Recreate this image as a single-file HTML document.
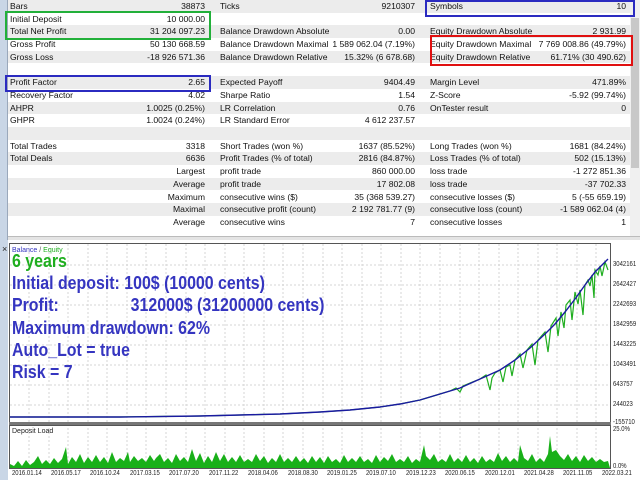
<!DOCTYPE html>
<html><head><meta charset="utf-8"><style>
*{margin:0;padding:0;box-sizing:border-box}
body{width:640px;height:480px;overflow:hidden;background:#fff;font-family:"Liberation Sans",sans-serif;font-size:8.6px;color:#111;position:relative}
.side{position:absolute;left:0;top:0;width:8px;height:480px;background:#c9d6e6;border-right:1px solid #9aa8bb}
.row{position:absolute;left:8px;width:622px;height:12.7px}
.row.g{background:#ececec}
.c{position:absolute;top:0;line-height:12.7px;white-space:nowrap}
.l1{left:2px}.v1{right:425px}.l2{left:212px}.v2{right:215px}.l3{left:422px}.v3{right:4px}
.box{position:absolute;border:2px solid}
.scroll{position:absolute;right:0;top:0;width:10px;height:237px;background:#f0f0f0}
.big{position:absolute;left:12px;font-weight:bold;font-size:18.5px;color:#3535c0;white-space:nowrap;transform:scaleX(0.86);transform-origin:0 0}
.ax{position:absolute;left:613px;font-size:7px;color:#222;transform:scaleX(0.85);transform-origin:0 0}
.dt{position:absolute;top:470px;font-size:7px;color:#222;transform:scaleX(0.85);transform-origin:0 0}
</style></head><body>
<div class="side"></div>
<div class="scroll"><div style="position:absolute;left:1px;top:18px;width:8px;height:150px;background:#c8c8c8"></div></div>

<div class="row g" style="top:0"><span class="c l1">Bars</span><span class="c v1">38873</span><span class="c l2">Ticks</span><span class="c v2">9210307</span><span class="c l3">Symbols</span><span class="c v3">10</span></div>
<div class="row" style="top:12.7px"><span class="c l1">Initial Deposit</span><span class="c v1">10 000.00</span></div>
<div class="row g" style="top:25.4px"><span class="c l1">Total Net Profit</span><span class="c v1">31 204 097.23</span><span class="c l2">Balance Drawdown Absolute</span><span class="c v2">0.00</span><span class="c l3">Equity Drawdown Absolute</span><span class="c v3">2 931.99</span></div>
<div class="row" style="top:38.1px"><span class="c l1">Gross Profit</span><span class="c v1">50 130 668.59</span><span class="c l2">Balance Drawdown Maximal</span><span class="c v2">1 589 062.04 (7.19%)</span><span class="c l3">Equity Drawdown Maximal</span><span class="c v3">7 769 008.86 (49.79%)</span></div>
<div class="row g" style="top:50.8px"><span class="c l1">Gross Loss</span><span class="c v1">-18 926 571.36</span><span class="c l2">Balance Drawdown Relative</span><span class="c v2">15.32% (6 678.68)</span><span class="c l3">Equity Drawdown Relative</span><span class="c v3">61.71% (30 490.62)</span></div>
<div class="row" style="top:63.5px"></div>
<div class="row g" style="top:76.2px"><span class="c l1">Profit Factor</span><span class="c v1">2.65</span><span class="c l2">Expected Payoff</span><span class="c v2">9404.49</span><span class="c l3">Margin Level</span><span class="c v3">471.89%</span></div>
<div class="row" style="top:88.9px"><span class="c l1">Recovery Factor</span><span class="c v1">4.02</span><span class="c l2">Sharpe Ratio</span><span class="c v2">1.54</span><span class="c l3">Z-Score</span><span class="c v3">-5.92 (99.74%)</span></div>
<div class="row g" style="top:101.6px"><span class="c l1">AHPR</span><span class="c v1">1.0025 (0.25%)</span><span class="c l2">LR Correlation</span><span class="c v2">0.76</span><span class="c l3">OnTester result</span><span class="c v3">0</span></div>
<div class="row" style="top:114.3px"><span class="c l1">GHPR</span><span class="c v1">1.0024 (0.24%)</span><span class="c l2">LR Standard Error</span><span class="c v2">4 612 237.57</span></div>
<div class="row g" style="top:127px"></div>
<div class="row" style="top:139.7px"><span class="c l1">Total Trades</span><span class="c v1">3318</span><span class="c l2">Short Trades (won %)</span><span class="c v2">1637 (85.52%)</span><span class="c l3">Long Trades (won %)</span><span class="c v3">1681 (84.24%)</span></div>
<div class="row g" style="top:152.4px"><span class="c l1">Total Deals</span><span class="c v1">6636</span><span class="c l2">Profit Trades (% of total)</span><span class="c v2">2816 (84.87%)</span><span class="c l3">Loss Trades (% of total)</span><span class="c v3">502 (15.13%)</span></div>
<div class="row" style="top:165.1px"><span class="c v1">Largest</span><span class="c l2">profit trade</span><span class="c v2">860 000.00</span><span class="c l3">loss trade</span><span class="c v3">-1 272 851.36</span></div>
<div class="row g" style="top:177.8px"><span class="c v1">Average</span><span class="c l2">profit trade</span><span class="c v2">17 802.08</span><span class="c l3">loss trade</span><span class="c v3">-37 702.33</span></div>
<div class="row" style="top:190.5px"><span class="c v1">Maximum</span><span class="c l2">consecutive wins ($)</span><span class="c v2">35 (368 539.27)</span><span class="c l3">consecutive losses ($)</span><span class="c v3">5 (-55 659.19)</span></div>
<div class="row g" style="top:203.2px"><span class="c v1">Maximal</span><span class="c l2">consecutive profit (count)</span><span class="c v2">2 192 781.77 (9)</span><span class="c l3">consecutive loss (count)</span><span class="c v3">-1 589 062.04 (4)</span></div>
<div class="row" style="top:215.9px"><span class="c v1">Average</span><span class="c l2">consecutive wins</span><span class="c v2">7</span><span class="c l3">consecutive losses</span><span class="c v3">1</span></div>
<div style="position:absolute;left:8px;top:236px;width:632px;height:4px;background:#e4e4e4;border-top:1px solid #bbb"></div>

<div class="box" style="left:5px;top:11px;width:206px;height:29px;border-color:#22b03a"></div>
<div class="box" style="left:5px;top:75px;width:206px;height:17px;border-color:#2b2bc0"></div>
<div class="box" style="left:425px;top:0;width:210px;height:17px;border-color:#2b2bc0"></div>
<div class="box" style="left:430px;top:35px;width:203px;height:31px;border-color:#e01010"></div>

<svg style="position:absolute;left:0;top:240px" width="640" height="240">
<rect x="0" y="0" width="640" height="240" fill="#fff"/>
<rect x="0" y="0" width="8" height="240" fill="#c9d6e6"/>
<g stroke="#d4d4d4" stroke-dasharray="2,2" stroke-width="1">
<path d="M10 25H610M10 45H610M10 65H610M10 85H610M10 105H610M10 125H610M10 145H610M10 165H610"/>
<path d="M29 4V228M49 4V228M68 4V228M88 4V228M107 4V228M127 4V228M146 4V228M166 4V228M186 4V228M205 4V228M225 4V228M244 4V228M264 4V228M283 4V228M303 4V228M323 4V228M342 4V228M362 4V228M381 4V228M401 4V228M420 4V228M440 4V228M460 4V228M479 4V228M499 4V228M518 4V228M538 4V228M557 4V228M577 4V228M596 4V228"/>
</g>
<rect x="9.5" y="3.5" width="601" height="180" fill="none" stroke="#555"/>
<rect x="9" y="182" width="602" height="3" fill="#777"/>
<rect x="9.5" y="185.5" width="601" height="43" fill="none" stroke="#555"/>
<polyline fill="none" stroke="#1fae1f" stroke-width="1.2" points="10,177 120,177 200,176 280,174 320,172 350,170 380,167 400,164 420,160 430,157 440,154 450,151 456,148 460,152 463,146 470,143 480,139 486,135 490,150 492,138 495,133 500,130 503,142 506,127 510,125 512,136 515,120 520,114 523,128 527,110 532,104 535,125 538,100 545,92 548,112 551,86 556,78 558,96 561,72 564,88 566,65 570,60 572,80 575,52 578,64 580,50 583,75 585,45 588,40 590,46 592,35 594,58 595,30 598,35 600,26 602,36 605,22 608,30"/>
<polyline fill="none" stroke="#1a1aa0" stroke-width="1.4" points="10,177 120,177 200,176 280,174 320,172 350,170 380,167 400,164 420,160 440,154 460,148 480,139 500,130 515,120 530,108 545,94 555,84 565,72 575,59 585,45 595,32 602,25 608,19"/>
<path fill="#19b019" d="M10 228 L10 224 L14 226 L18 221 L22 226 L26 220 L30 225 L34 222 L38 216 L42 224 L46 220 L50 224 L54 218 L58 223 L62 219 L66 207 L68 224 L72 217 L76 222 L80 214 L84 223 L88 217 L92 222 L96 215 L100 222 L104 217 L108 223 L112 212 L116 222 L120 218 L124 221 L128 212 L130 222 L134 216 L138 221 L142 218 L146 222 L150 215 L154 221 L156 218 L160 214 L164 222 L168 218 L172 223 L176 214 L180 221 L184 217 L188 222 L192 209 L196 221 L200 213 L204 223 L208 216 L212 222 L216 212 L220 221 L224 214 L228 222 L232 217 L236 222 L240 215 L244 222 L248 219 L252 222 L256 214 L260 221 L264 216 L268 223 L272 218 L276 222 L280 214 L284 222 L288 218 L292 222 L296 216 L300 222 L304 218 L308 223 L312 216 L316 222 L320 217 L324 223 L328 216 L332 222 L336 219 L340 223 L344 215 L348 222 L352 218 L356 222 L360 216 L364 222 L368 219 L372 223 L376 215 L380 222 L384 217 L388 221 L392 214 L396 222 L400 219 L404 222 L408 216 L412 223 L416 219 L420 222 L424 205 L426 216 L430 220 L434 214 L438 222 L442 219 L446 222 L450 214 L454 222 L458 218 L462 222 L466 215 L470 222 L474 218 L478 223 L482 216 L486 222 L490 219 L494 222 L498 213 L502 221 L506 216 L510 222 L514 218 L518 222 L520 205 L524 218 L528 221 L532 214 L536 222 L540 218 L544 222 L548 214 L550 196 L552 212 L556 210 L560 216 L564 220 L568 214 L572 221 L576 216 L580 222 L584 215 L588 221 L592 217 L596 222 L600 219 L604 222 L608 221 L610 228Z"/>
<text x="12" y="12" font-size="7" font-family="Liberation Sans" fill="#3535c0">Balance <tspan fill="#555">/</tspan> <tspan fill="#1fae1f">Equity</tspan></text>
<text x="12" y="193" font-size="7" font-family="Liberation Sans" fill="#222">Deposit Load</text>
<text x="2" y="12" font-size="9" font-family="Liberation Sans" fill="#222">×</text>
</svg>

<div class="big" style="top:250px;color:#1fae1f">6 years</div>
<div class="big" style="top:272px">Initial deposit: 100$ (10000 cents)</div>
<div class="big" style="top:294px">Profit:<span style="position:absolute;left:138px">312000$ (31200000 cents)</span></div>
<div class="big" style="top:317px">Maximum drawdown: 62%</div>
<div class="big" style="top:339px">Auto_Lot = true</div>
<div class="big" style="top:361px">Risk = 7</div>

<div class="ax" style="top:261px">3042161</div>
<div class="ax" style="top:281px">2642427</div>
<div class="ax" style="top:301px">2242693</div>
<div class="ax" style="top:321px">1842959</div>
<div class="ax" style="top:341px">1443225</div>
<div class="ax" style="top:361px">1043491</div>
<div class="ax" style="top:381px">643757</div>
<div class="ax" style="top:401px">244023</div>
<div class="ax" style="top:419px">-155710</div>
<div class="ax" style="top:426px">25.0%</div>
<div class="ax" style="top:463px">0.0%</div>

<div class="dt" style="left:12px">2016.01.14</div>
<div class="dt" style="left:51px">2016.05.17</div>
<div class="dt" style="left:90px">2016.10.24</div>
<div class="dt" style="left:130px">2017.03.15</div>
<div class="dt" style="left:169px">2017.07.20</div>
<div class="dt" style="left:209px">2017.11.22</div>
<div class="dt" style="left:248px">2018.04.06</div>
<div class="dt" style="left:288px">2018.08.30</div>
<div class="dt" style="left:327px">2019.01.25</div>
<div class="dt" style="left:366px">2019.07.10</div>
<div class="dt" style="left:406px">2019.12.23</div>
<div class="dt" style="left:445px">2020.06.15</div>
<div class="dt" style="left:485px">2020.12.01</div>
<div class="dt" style="left:524px">2021.04.28</div>
<div class="dt" style="left:563px">2021.11.05</div>
<div class="dt" style="left:602px">2022.03.21</div>
</body></html>
